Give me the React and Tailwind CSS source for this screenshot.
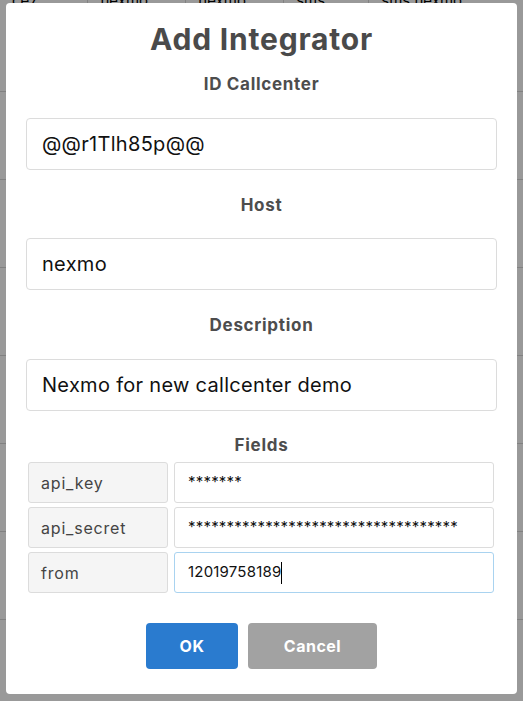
import { useState } from 'react';

const ROWS = [
    ['ce7', 'nexmo', 'nexmo', 'sms', 'sms nexmo'],
    ['a91', 'twilio', 'twilio', 'voice', 'voice demo'],
    ['b22', 'plivo', 'plivo', 'sms', 'sms plivo'],
    ['Client', 'nexmo', 'nexmo', 'app', 'App demo'],
    ['d45', 'twilio', 'twilio', 'sms', 'sms test'],
    ['e03', 'nexmo', 'nexmo', 'voice', 'voice nexmo'],
    ['f17', 'plivo', 'plivo', 'sms', 'sms demo'],
];

const FIELDS = [
    { name: 'api_key', value: '*******' },
    { name: 'api_secret', value: '***********************************' },
    { name: 'from', value: '12019758189', focused: true },
];

/**
 * Integrators list that sits behind the dialog
 */
function IntegratorTable() {
    return (
        <table className="w-full border-collapse text-[15px] text-black">
            <tbody>
                {ROWS.map((row, i) => (
                    <tr key={i} className={i === 0 ? 'h-[91px] align-top' : 'h-[88px]'}>
                        {row.map((cell, j) => (
                            <td
                                key={j}
                                className={`border-b border-[#d8d8d8] px-3 ${j > 0 ? 'border-l' : ''}`}
                            >
                                <span className={i === 0 ? 'relative -top-[10px]' : ''}>{cell}</span>
                            </td>
                        ))}
                    </tr>
                ))}
            </tbody>
        </table>
    );
}

function SectionLabel({ children }) {
    return (
        <h3 className="text-center text-[17px] leading-6 font-bold tracking-[0.7px] text-[#4d4d4d]">
            {children}
        </h3>
    );
}

function TextInput({ value, onChange }) {
    return (
        <input
            type="text"
            value={value}
            onChange={(e) => onChange(e.target.value)}
            className="w-full h-[52px] px-[15px] bg-white border border-[#dcdcdc] rounded-[4px] text-[20px] tracking-[0.3px] text-[#111] focus:outline-none"
        />
    );
}

export default function App() {
    const [callcenterId, setCallcenterId] = useState('@@r1Tlh85p@@');
    const [host, setHost] = useState('nexmo');
    const [description, setDescription] = useState('Nexmo for new callcenter demo');

    return (
        <div className="relative min-h-[701px] bg-white font-['Inter',sans-serif]">
            <IntegratorTable />

            {/* Modal overlay */}
            <div className="fixed inset-0 bg-black/40 flex justify-center items-start pt-[3px]">
                <div className="w-[511px] h-[691px] bg-white rounded-[4px] px-5 pt-[19px]">
                    <h2 className="text-center text-[30px] leading-[34px] font-bold tracking-[0.8px] text-[#4a4a4a]">
                        Add Integrator
                    </h2>

                    <div className="mt-4">
                        <SectionLabel>ID Callcenter</SectionLabel>
                    </div>
                    <div className="mt-[22px]">
                        <TextInput value={callcenterId} onChange={setCallcenterId} />
                    </div>

                    <div className="mt-[23px]">
                        <SectionLabel>Host</SectionLabel>
                    </div>
                    <div className="mt-[21px]">
                        <TextInput value={host} onChange={setHost} />
                    </div>

                    <div className="mt-[23px]">
                        <SectionLabel>Description</SectionLabel>
                    </div>
                    <div className="mt-[22px]">
                        <TextInput value={description} onChange={setDescription} />
                    </div>

                    <div className="mt-[22px]">
                        <SectionLabel>Fields</SectionLabel>
                    </div>

                    {/* Key / value fields */}
                    <div className="mt-[5px] ml-[2px] mr-[3px] flex flex-col gap-1">
                        {FIELDS.map((field) => (
                            <div key={field.name} className="flex gap-[6px]">
                                <div className="w-[140px] h-[41px] flex items-center px-[12px] bg-[#f5f5f5] border border-[#dcdcdc] rounded-[3px] text-[16px] tracking-[0.8px] text-[#444]">
                                    {field.name}
                                </div>
                                <div
                                    className={`flex-1 h-[41px] flex items-center px-[13px] bg-white border rounded-[3px] text-[15px] tracking-[0.2px] text-[#111] ${
                                        field.focused ? 'border-[#a9d3f0]' : 'border-[#dcdcdc]'
                                    }`}
                                >
                                    <span>{field.value}</span>
                                    {field.focused && <span className="w-px h-[22px] bg-black" />}
                                </div>
                            </div>
                        ))}
                    </div>

                    <div className="mt-[30px] flex justify-center gap-[10px]">
                        <button className="w-[92px] h-[46px] rounded-[4px] bg-[#2a7bcf] text-white text-[16px] font-bold tracking-[0.5px]">
                            OK
                        </button>
                        <button className="w-[129px] h-[46px] rounded-[4px] bg-[#a2a2a2] text-white text-[16px] font-bold tracking-[0.5px]">
                            Cancel
                        </button>
                    </div>
                </div>
            </div>
        </div>
    );
}
